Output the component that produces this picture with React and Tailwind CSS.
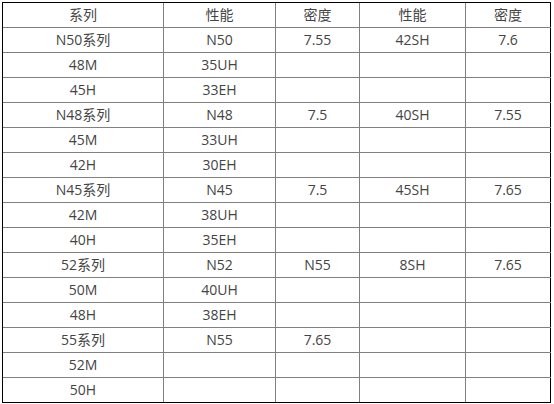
const rows = [
  ["系列", "性能", "密度", "性能", "密度"],
  ["N50系列", "N50", "7.55", "42SH", "7.6"],
  ["48M", "35UH", "", "", ""],
  ["45H", "33EH", "", "", ""],
  ["N48系列", "N48", "7.5", "40SH", "7.55"],
  ["45M", "33UH", "", "", ""],
  ["42H", "30EH", "", "", ""],
  ["N45系列", "N45", "7.5", "45SH", "7.65"],
  ["42M", "38UH", "", "", ""],
  ["40H", "35EH", "", "", ""],
  ["52系列", "N52", "N55", "8SH", "7.65"],
  ["50M", "40UH", "", "", ""],
  ["48H", "38EH", "", "", ""],
  ["55系列", "N55", "7.65", "", ""],
  ["52M", "", "", "", ""],
  ["50H", "", "", "", ""],
];

export default function App() {
  return (
    <div className="w-[554px] h-[404px] bg-white pl-[2px] pt-[2px]">
      <div className="w-[549px] border-l border-t border-black font-['Open_Sans','Noto_Sans_CJK_SC',sans-serif] text-[14px] text-[#444]">
        {rows.map((row, i) => (
          <div
            key={i}
            className={`grid grid-cols-[161px_112px_84px_106px_85px] h-[25px] border-b ${
              i === rows.length - 1 ? "border-black" : "border-[#808080]"
            }`}
          >
            {row.map((cell, j) => (
              <div
                key={j}
                className={`flex items-center justify-center border-r leading-none ${
                  j === 4 ? "border-black" : "border-[#808080]"
                }`}
              >
                {cell}
              </div>
            ))}
          </div>
        ))}
      </div>
    </div>
  );
}
